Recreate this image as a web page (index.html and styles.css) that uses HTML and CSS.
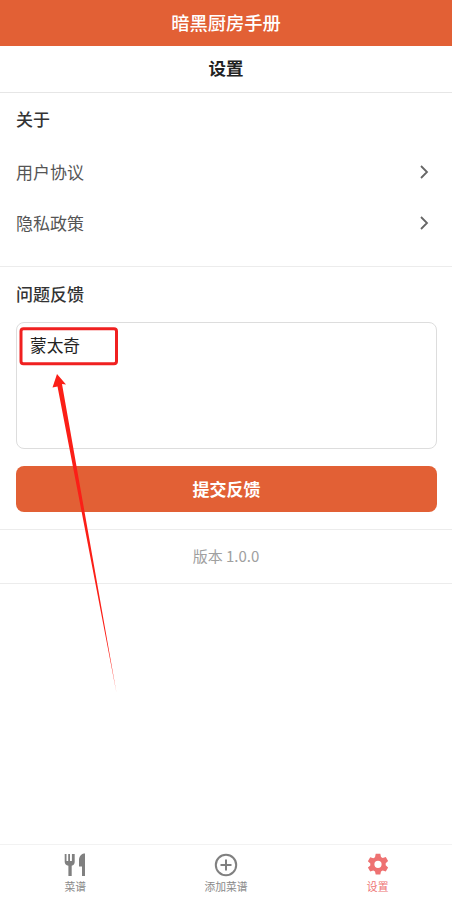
FILE: index.html
```html
<!DOCTYPE html>
<html lang="zh-CN">
<head>
<meta charset="utf-8">
<title>暗黑厨房手册</title>
<link rel="stylesheet" href="styles.css">
</head>
<body>
<div class="app">
  <header class="brand">暗黑厨房手册</header>
  <div class="title">设置</div>
  <main class="content">
    <section class="about">
      <h2 class="heading">关于</h2>
      <div class="row"><span>用户协议</span>
        <svg class="chev" viewBox="0 0 10 14"><path d="M2 1 8 7 2 13"/></svg></div>
      <div class="row"><span>隐私政策</span>
        <svg class="chev" viewBox="0 0 10 14"><path d="M2 1 8 7 2 13"/></svg></div>
    </section>
    <section class="feedback">
      <h2 class="heading">问题反馈</h2>
      <div class="textarea">蒙太奇</div>
      <div class="submit">提交反馈</div>
    </section>
    <div class="version">版本 1.0.0</div>
  </main>
  <nav class="tabs">
    <div class="tab">
      <svg class="tab-icon" viewBox="0 0 24 24"><path class="fill" d="M1.700 1h1.800v7h1.700V1H7v7h1.900V1h2.800v8c0 2-1.200 3.300-3 3.800V23H5.400V12.800c-2.200-.5-3.700-1.800-3.700-3.800zM16 13.500V7c0-3 2-6 5-6.500h1V23h-3V13.500z"/></svg>
      <span>菜谱</span>
    </div>
    <div class="tab">
      <svg class="tab-icon" viewBox="0 0 24 24"><circle class="line" cx="12" cy="12" r="10.200"/><path class="line" d="M12 6.500v11M6.500 12h11"/></svg>
      <span>添加菜谱</span>
    </div>
    <div class="tab active">
      <svg class="tab-icon" viewBox="0 0 24 24"><path class="fill-on" fill-rule="evenodd" d="M9.700.8h4.600l.7 3.200 1.700 1 3.100-1 2.300 4-2.400 2.200v2l2.400 2.200-2.300 4-3.100-1-1.700 1-.7 3.200H9.700L9 18.600l-1.700-1-3.100 1-2.300-4 2.400-2.200v-2L1.900 8.200l2.300-4 3.100 1L9 4.200zM12 7.700a3.600 3.600 0 1 0 0 7.200 3.600 3.600 0 0 0 0-7.200z"/></svg>
      <span>设置</span>
    </div>
  </nav>
  <svg class="markup" viewBox="0 0 452 903">
    <rect class="markup-box" x="21" y="328.700" width="95.500" height="35" rx="2.500"/>
    <path class="markup-arrow" d="M57 374 66 384.500 62 384 116.500 693 57.500 386.500 52.500 387.500z"/>
  </svg>
</div>
</body>
</html>
```
FILE: styles.css
```css
* { box-sizing: border-box; }
html, body { margin: 0; padding: 0; height: 100%; }
body { background: #fff; font-family: "Noto Sans CJK SC", "Noto Sans", sans-serif; }
.app { position: relative; width: 452px; height: 903px; display: flex; flex-direction: column; overflow: hidden; }
.brand { height: 46px; flex: none; background: #e26035; color: #fff; font-size: 18.300px; font-weight: 500; line-height: 44px; text-align: center; }
.title { height: 47px; flex: none; border-bottom: 1px solid #e6e6e6; color: #222; font-size: 17.500px; font-weight: 700; line-height: 44px; text-align: center; }
.content { flex: 1; }
.about { height: 174px; padding: 15px 16px 0; border-bottom: 1px solid #ececec; }
.heading { margin: 0; font-size: 17px; font-weight: 500; line-height: 22px; color: #333; }
.row { height: 51px; display: flex; align-items: center; justify-content: space-between; color: #555; font-size: 17px; }
.row:first-of-type { margin-top: 16px; }
.chev { width: 10px; height: 14px; margin-right: 7px; }
.chev path { fill: none; stroke: #666; stroke-width: 1.800; }
.feedback { height: 263px; padding: 16px 15px 0 16px; border-bottom: 1px solid #ececec; }
.textarea { height: 127px; margin-top: 17px; padding: 8px 13px; border: 1px solid #ddd; border-radius: 8px; color: #222; font-size: 16.700px; line-height: 28px; }
.submit { height: 46px; margin-top: 17px; border-radius: 8px; background: #e26035; color: #fff; font-size: 17px; font-weight: 700; line-height: 46px; text-align: center; }
.version { height: 54px; border-bottom: 1px solid #ececec; color: #a0a0a0; font-size: 15px; line-height: 51px; text-align: center; }
.tabs { height: 59px; flex: none; border-top: 1px solid #f2f2f2; display: grid; grid-template-columns: repeat(3, 1fr); }
.tab { display: flex; flex-direction: column; align-items: center; padding-top: 8px; color: #8a8a8a; font-size: 10.800px; line-height: 14px; }
.tab span { margin-top: 2px; }
.tab-icon { width: 24px; height: 24px; }
.fill { fill: #808080; }
.line { fill: none; stroke: #808080; stroke-width: 2; }
.active { padding-left: 2px; color: #ee7272; }
.fill-on { fill: #ee7272; }
.markup { position: absolute; inset: 0; width: 452px; height: 903px; pointer-events: none; }
.markup-box { fill: none; stroke: #f02020; stroke-width: 3; }
.markup-arrow { fill: #fb1f17; }
```
